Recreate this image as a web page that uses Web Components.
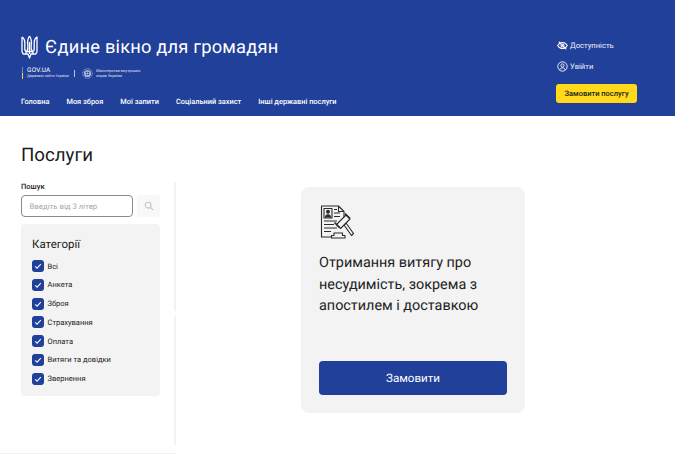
<!DOCTYPE html>
<html lang="uk">
<head>
<meta charset="utf-8">
<title>Послуги</title>
<style>
    html, body { margin: 0; background: #fff; }
    body { font-family: 'Roboto', 'Liberation Sans', sans-serif; color: #1a1a1a; text-rendering: geometricPrecision; }
</style>
</head>
<body>
<app-header></app-header>
<services-page></services-page>

<script>
class GovLogos extends HTMLElement {
    constructor() {
        super();
        this.attachShadow({ mode: 'open' });
        this.shadowRoot.innerHTML = `
            <style>
                :host { display: flex; align-items: center; color: #fff; height: 12px; padding-left: 1px; }
                .bar { width: 1px; height: 12px; margin-right: 4px; background: linear-gradient(#5b8fe0 50%, #ffd91a 50%); }
                .gov { width: 47px; }
                .gov b { display: block; font-size: 6.5px; font-weight: 400; line-height: 7px; letter-spacing: .2px; }
                .gov span { display: block; font-size: 3.7px; line-height: 5px; white-space: nowrap; opacity: .85; }
                .sep { width: 1px; height: 7px; background: rgba(255,255,255,.7); margin-right: 7px; }
                svg { width: 11px; height: 11px; margin-right: 3px; }
                .min { font-size: 3.9px; line-height: 5px; white-space: nowrap; opacity: .85; }
            </style>
            <div class="bar"></div>
            <div class="gov"><b>GOV.UA</b><span>Державні сайти України</span></div>
            <div class="sep"></div>
            <svg viewBox="0 0 22 22" fill="none" stroke="#d5dcee" stroke-width="1.4">
                <circle cx="11" cy="11" r="9.5" stroke-dasharray="2 1"/>
                <circle cx="11" cy="11" r="5.5" stroke-width="2.4"/>
                <path d="M11 6v10M6 11h10" stroke-width="1"/>
            </svg>
            <div class="min">Міністерство внутрішніх<br>справ України</div>
        `;
    }
}

class AppHeader extends HTMLElement {
    constructor() {
        super();
        this.attachShadow({ mode: 'open' });
        this.shadowRoot.innerHTML = `
            <style>
                :host { display: flex; justify-content: space-between; box-sizing: border-box; height: 116px; background: #21409a; color: #fff; padding: 35px 38px 0 21px; }
                .brand { display: flex; align-items: center; gap: 7px; height: 24px; margin-bottom: 8px; }
                .brand svg { width: 17px; height: 24px; }
                .brand h2 { margin: 0; font-size: 18.300px; font-weight: 400; letter-spacing: .2px; white-space: nowrap; }
                gov-logos { margin-top: 1px; }
                nav { display: flex; gap: 17px; margin-top: 18px; font-size: 7.400px; font-weight: 500; line-height: 10px; white-space: nowrap; }
                .side { display: flex; flex-direction: column; align-items: flex-start; padding-top: 5px; font-size: 7.600px; }
                .link { display: flex; align-items: center; gap: 2px; height: 11px; margin-left: 1px; margin-bottom: 10px; color: #f0f2fa; }
                .link svg { width: 11px; height: 11px; }
                .order { margin-top: 2px; width: 81px; height: 19px; display: flex; align-items: center; justify-content: center; background: #ffd91a; color: #1a1a1a; border-radius: 3px; font-size: 7.500px; font-weight: 500; white-space: nowrap; }
            </style>
            <div class="main">
                <div class="brand">
                    <svg viewBox="0 0 17 24" fill="none" stroke="#fff" stroke-width="1.300" stroke-linejoin="round">
                        <path d="M1 2v14c0 2.500 1.500 3.500 3.500 3h2.500L8.500 23l1.500-4h2.500c2 .5 3.500-.5 3.500-3V2c-1.800 1-2.800 3-2.800 5.500V14c0 1.500-.7 2.500-2 2.500"/>
                        <path d="M1 2c1.800 1 2.800 3 2.800 5.500V14c0 1.500.7 2.500 2 2.500"/>
                        <path d="M8.500 1C6.500 4 6.300 7 6.800 10c.4 2.500.3 4.500-1 6.500M8.500 1c2 3 2.200 6 1.700 9-.4 2.500-.3 4.500 1 6.500"/>
                        <path d="M4.500 19l1-2.500h6l1 2.500M8.500 7v12"/>
                    </svg>
                    <h2>Єдине вікно для громадян</h2>
                </div>
                <gov-logos></gov-logos>
                <nav>
                    <span>Головна</span><span>Моя зброя</span><span>Мої запити</span><span>Соціальний захист</span><span>Інші державні послуги</span>
                </nav>
            </div>
            <div class="side">
                <div class="link">
                    <svg viewBox="0 0 16 16" fill="none" stroke="#fff" stroke-width="1.500">
                        <path d="M1 8s2.500-4.500 7-4.500S15 8 15 8s-2.500 4.500-7 4.500S1 8 1 8z"/>
                        <circle cx="8" cy="8" r="2.200"/>
                        <path d="M2.500 2.500l11 11"/>
                    </svg>
                    Доступність
                </div>
                <div class="link">
                    <svg viewBox="0 0 16 16" fill="none" stroke="#fff" stroke-width="1.300">
                        <circle cx="8" cy="8" r="6.800"/>
                        <circle cx="8" cy="6.500" r="2.300"/>
                        <path d="M3.800 13c.8-2 2.300-2.800 4.200-2.800s3.400.8 4.200 2.800"/>
                    </svg>
                    Увійти
                </div>
                <div class="order">Замовити послугу</div>
            </div>
        `;
    }
}

class CategoryCheck extends HTMLElement {
    constructor() {
        super();
        this.attachShadow({ mode: 'open' });
        this.shadowRoot.innerHTML = `
            <style>
                :host { display: flex; align-items: center; gap: 3.500px; height: 12px; font-size: 7.500px; color: #222; white-space: nowrap; }
                .box { width: 12px; height: 12px; border-radius: 3px; background: #21409a; display: flex; align-items: center; justify-content: center; }
                svg { width: 8px; height: 8px; }
            </style>
            <div class="box">
                <svg viewBox="0 0 10 10" fill="none" stroke="#fff" stroke-width="1.300"><path d="M1.500 5.500l2.300 2.200 4.700-5"/></svg>
            </div>
            <slot></slot>
        `;
    }
}

class ServiceSidebar extends HTMLElement {
    constructor() {
        super();
        this.attachShadow({ mode: 'open' });
        this.shadowRoot.innerHTML = `
            <style>
                :host { display: block; width: 139px; }
                label { display: block; font-size: 7.500px; font-weight: 500; line-height: 10px; margin-bottom: 3px; color: #222; }
                .search { display: flex; gap: 4px; margin-bottom: 7px; }
                .input { box-sizing: border-box; width: 112.500px; height: 22px; border: 1px solid #8a8a8a; border-radius: 4px; padding-left: 7.500px; display: flex; align-items: center; font-size: 7.800px; color: #a8a8a8; white-space: nowrap; }
                .btn { width: 23px; height: 22px; background: #f8f8f8; border-radius: 3px; display: flex; align-items: center; justify-content: center; }
                .btn svg { width: 10px; height: 10px; }
                .panel { box-sizing: border-box; height: 172px; background: #f3f3f3; border-radius: 4px; padding: 13px 11px 0; }
                h3 { margin: 0 0 9px; font-size: 11.500px; font-weight: 400; line-height: 14px; color: #1a1a1a; }
                .list { display: flex; flex-direction: column; gap: 6.750px; }
            </style>
            <label>Пошук</label>
            <div class="search">
                <div class="input">Введіть від 3 літер</div>
                <div class="btn">
                    <svg viewBox="0 0 12 12" fill="none" stroke="#c4c4c4" stroke-width="1.300"><circle cx="5" cy="5" r="3.500"/><path d="M7.700 7.700L11 11"/></svg>
                </div>
            </div>
            <div class="panel">
                <h3>Категорії</h3>
                <div class="list"><slot></slot></div>
            </div>
        `;
    }
}

class ServiceCard extends HTMLElement {
    constructor() {
        super();
        this.attachShadow({ mode: 'open' });
        this.shadowRoot.innerHTML = `
            <style>
                :host { display: flex; flex-direction: column; box-sizing: border-box; width: 224px; height: 226px; background: #f3f3f3; border-radius: 8px; padding: 18px 18px 18px; }
                svg { width: 34px; height: 34px; margin-left: 1px; margin-bottom: 13px; }
                p { margin: 0; font-size: 14.400px; line-height: 21.500px; color: #222; }
                .order { margin-top: auto; height: 34px; background: #21409a; color: #fff; border-radius: 4px; display: flex; align-items: center; justify-content: center; font-size: 11.600px; font-weight: 400; }
            </style>
            <svg viewBox="0 0 34 34" fill="none" stroke="#2b2b2b" stroke-width="1.100" stroke-linejoin="round">
                <path d="M12 32H1.500V1h17l5.500 5.500v6M18.500 1v5.500H24"/>
                <rect x="4" y="3.500" width="8" height="9.500"/>
                <circle cx="8" cy="6.800" r="1.400" fill="#2b2b2b"/>
                <path d="M5.500 12.500c0-2 1-2.800 2.500-2.800s2.500.8 2.500 2.800" fill="#2b2b2b"/>
                <path d="M14 4.500h3M14 8h6M14 11.500h6M4 16h13M4 19.500h10M4 23h13M4 26.500h7"/>
                <path d="M24 20l2-2 7.500 10.500-2 2z" fill="#f3f3f3"/>
                <path d="M16.500 19.500L26 10l4 4-9.500 9.500z" fill="#f3f3f3"/>
                <path d="M14.500 17.500l5 5M25 8.500l5 5" stroke-width="1.700"/>
                <path d="M11.500 33v-2.500h2.500V28h8.500v2.500h2.500V33z" fill="#f3f3f3"/>
            </svg>
            <p><slot></slot></p>
            <div class="order">Замовити</div>
        `;
    }
}

class ServicesPage extends HTMLElement {
    constructor() {
        super();
        this.attachShadow({ mode: 'open' });
        this.shadowRoot.innerHTML = `
            <style>
                :host { display: block; height: 339px; box-sizing: border-box; padding: 27px 0 0 21px; }
                h1 { margin: 0 0 15px; font-size: 18.700px; font-weight: 400; line-height: 24px; color: #1a1a1a; }
                .cols { display: flex; }
                .divider { width: 2px; height: 263px; margin-left: 14px; background: linear-gradient(#f2f2f2 49%, #fff 49%, #fff 51%, #f2f2f2 51%); }
                .content { padding: 5px 0 0 125px; }
                .rule { width: 176px; height: 1px; margin: 8px 0 0 -21px; background: #eff0f6; }
            </style>
            <h1>Послуги</h1>
            <div class="cols">
                <service-sidebar>
                    <category-check>Всі</category-check>
                    <category-check>Анкета</category-check>
                    <category-check>Зброя</category-check>
                    <category-check>Страхування</category-check>
                    <category-check>Оплата</category-check>
                    <category-check>Витяги та довідки</category-check>
                    <category-check>Звернення</category-check>
                </service-sidebar>
                <div class="divider"></div>
                <div class="content">
                    <service-card>Отримання витягу про несудимість, зокрема з апостилем і доставкою</service-card>
                </div>
            </div>
            <div class="rule"></div>
        `;
    }
}

customElements.define('gov-logos', GovLogos);
customElements.define('app-header', AppHeader);
customElements.define('category-check', CategoryCheck);
customElements.define('service-sidebar', ServiceSidebar);
customElements.define('service-card', ServiceCard);
customElements.define('services-page', ServicesPage);
</script>
</body>
</html>
